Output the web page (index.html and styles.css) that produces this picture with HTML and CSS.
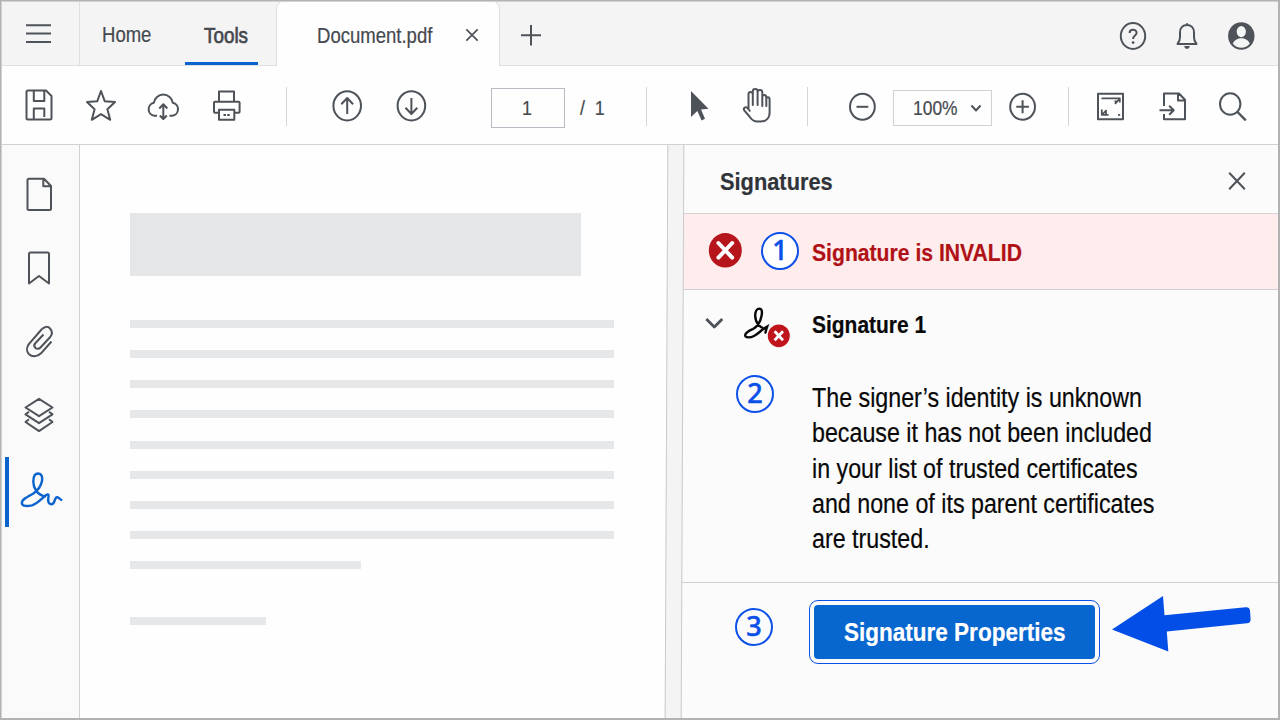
FILE: index.html
```html
<!DOCTYPE html>
<html lang="en">
<head>
    <meta charset="UTF-8">
    <meta name="viewport" content="width=device-width, initial-scale=1.0">
    <title>Document.pdf</title>
    <link rel="stylesheet" href="styles.css">
</head>
<body>
    <div class="window">
        <!-- Tabs -->
        <header class="tab-bar">
            <div class="menu">
                <svg class="icon" width="40" height="40" viewBox="0 0 40 40"><path d="M7 11.2H32M7 19.6H32M7 28H32"/></svg>
            </div>
            <div class="tab home"><span class="text">Home</span></div>
            <div class="tab tools"><span class="text">Tools</span></div>
            <div class="tab file">
                <span class="text">Document.pdf</span>
                <svg class="icon thin" width="16" height="16" viewBox="0 0 16 16"><path d="M2.3 2.3L13.7 13.7M13.7 2.3L2.3 13.7"/></svg>
            </div>
            <div class="new-tab">
                <svg class="icon" width="24" height="24" viewBox="0 0 24 24"><path d="M12 1V21.5M2 11.3H22"/></svg>
            </div>
            <div class="account">
                <svg class="icon" width="32" height="32" viewBox="0 0 32 32"><ellipse cx="16" cy="16" rx="12.2" ry="12.9"/><path d="M12.6 13C12.6 8.8 19.6 8.8 19.6 12.8C19.6 15.6 16.1 15.6 16.1 19"/><circle class="solid" cx="16.1" cy="22.6" r="1.4"/></svg>
                <svg class="icon" width="32" height="32" viewBox="0 0 32 32"><path d="M6.5 24H25.5C23.8 22 23 20.5 23 17V12.5C23 7.8 20 5 16 5S9 7.8 9 12.5V17C9 20.5 8.2 22 6.5 24ZM16 5V3.2"/><path class="solid" d="M13.2 26H18.8C18.3 29.8 13.7 29.8 13.2 26Z"/></svg>
                <svg width="32" height="32" viewBox="0 0 32 32"><ellipse cx="16.3" cy="16" rx="13.2" ry="13.8" fill="#4e5359"/><ellipse cx="16.3" cy="11.6" rx="4.6" ry="5.6" fill="#f4f5f5"/><path d="M7.8 23.5C9.5 19.7 13 18.3 16.3 18.3S23.1 19.7 24.8 23.5C20.5 29.3 12.1 29.3 7.8 23.5Z" fill="#f4f5f5"/></svg>
            </div>
        </header>

        <!-- Toolbar -->
        <div class="toolbar">
            <svg class="icon save" width="40" height="40" viewBox="0 0 40 40"><path d="M9 4.5H27L32.5 10V32C32.5 33 32 33.5 31 33.5H9C8 33.5 7.5 33 7.5 32V6C7.5 5 8 4.5 9 4.5Z"/><path d="M14.8 4.5V15H25.3V4.5M14.8 33.5V22.5H25.3V31"/></svg>
            <svg class="icon star" width="40" height="40" viewBox="0 0 40 40"><path d="M20 5L23.8 15.3L34 16L26.4 23.2L29.2 33.8L20 28.2L10.8 33.8L13.6 23.2L6 16L16.2 15.3Z"/></svg>
            <svg class="icon cloud" width="40" height="40" viewBox="0 0 40 40"><path d="M14 29.8H11.5A6.6 6.6 0 0 1 10.8 16.8A9.6 9.6 0 0 1 29.8 16.8A6.6 6.6 0 0 1 29.2 29.8H26.5"/><path d="M20.3 18.5V32.5M16.3 22.5L20.3 18.2L24.3 22.5M16.8 29.5L20.3 33L23.8 29.5"/></svg>
            <svg class="icon print" width="40" height="40" viewBox="0 0 40 40"><path d="M12 15.5V5.5H27V15.5M12 26.8H8C7.3 26.8 7 26.5 7 25.8V16.8C7 16 7.3 15.8 8 15.8H31.5C32.3 15.8 32.6 16 32.6 16.8V25.8C32.6 26.5 32.3 26.8 31.5 26.8H27.5M12 23.8H27.3V33.8H12Z"/><path d="M16.5 29H23" stroke-dasharray="2.5 1.2"/></svg>
            <div class="divider after-file"></div>
            <svg class="icon page-up" width="40" height="40" viewBox="0 0 40 40"><ellipse cx="20.2" cy="19.8" rx="13.8" ry="14.6"/><path d="M20.2 28V12.5M14.3 18.3L20.2 12L26.1 18.3"/></svg>
            <svg class="icon page-down" width="40" height="40" viewBox="0 0 40 40"><ellipse cx="20.4" cy="19.8" rx="13.8" ry="14.6"/><path d="M20.4 12V27.5M14.5 21.7L20.4 28L26.3 21.7"/></svg>
            <div class="page-input"><span class="text">1</span></div>
            <div class="page-count"><span class="text">/ &nbsp;1</span></div>
            <div class="divider after-page"></div>
            <svg class="icon pointer" width="40" height="40" viewBox="0 0 40 40"><path class="solid" d="M12 5L29.5 22.8L22 23.5L26 32.8L22.6 34.5L18.3 25L12 31Z"/></svg>
            <svg class="icon hand" width="40" height="40" viewBox="0 0 40 40"><path d="M11.5 23.5V8.5C11.5 5.3 15.8 5.3 15.8 8.5V19V5.5C15.8 2.2 20.6 2.2 20.6 5.5V19V6.3C20.6 3.1 25.3 3.1 25.3 6.3V20V11C25.3 8.3 29.3 8.3 29.3 11.5V20V13C29.3 10.6 32.6 10.6 32.6 13.5V26.5C32.6 32.5 28.5 35.5 23.5 35.5H20.5C16.5 35.5 14.3 33.5 12.5 30.5L7.2 24.3C6 21.8 8.6 20.3 10.5 22L13.3 25.5"/></svg>
            <div class="divider after-hand"></div>
            <svg class="icon minus" width="40" height="40" viewBox="0 0 40 40"><ellipse cx="20.4" cy="20.8" rx="12.4" ry="13"/><path d="M14.5 20.8H26.3"/></svg>
            <div class="zoom-select">
                <span class="text">100%</span>
                <svg class="icon" width="12" height="10" viewBox="0 0 12 10"><path d="M1.5 2.5L6 7.5L10.5 2.5"/></svg>
            </div>
            <svg class="icon plus" width="40" height="40" viewBox="0 0 40 40"><ellipse cx="20.6" cy="20.8" rx="12.4" ry="13"/><path d="M14.3 20.8H26.9M20.6 14.3V27.3"/></svg>
            <div class="divider after-zoom"></div>
            <svg class="icon fit" width="40" height="40" viewBox="0 0 40 40"><path d="M8 7.8H33V33.3H8Z"/><path d="M11.5 12.3H29.8V16.5M24.5 15.5H27.5M25 18L29 13.5M11.8 23.5V28.8H18.5M12.3 28.5L16.5 24M16 25V28M28 28.8H30.2" stroke-width="1.8"/></svg>
            <svg class="icon export" width="40" height="40" viewBox="0 0 40 40"><path d="M12 20V7.5H27L33 13.8V33.3H12V28M26 7.5V14.5H33M7.5 24.2H21.5M17.2 19.8L21.7 24.2L17.2 28.7"/></svg>
            <svg class="icon search" width="40" height="40" viewBox="0 0 40 40"><ellipse cx="17.2" cy="18" rx="10.2" ry="10.8"/><path d="M24.5 26L32.8 34.3" stroke-width="2.4"/></svg>
        </div>

        <div class="main">
            <!-- Left navigation -->
            <nav class="sidebar">
                <div class="nav-item"><svg class="icon" width="48" height="48" viewBox="0 0 48 48"><path d="M14 8.8H29L36 16V38.5C36 39.5 35.5 40 34.5 40H14C13 40 12.5 39.5 12.5 38.5V10.3C12.5 9.3 13 8.8 14 8.8ZM28.3 8.8V16.3H36"/></svg></div>
                <div class="nav-item"><svg class="icon" width="48" height="48" viewBox="0 0 48 48"><path d="M14 39.5V10C14 9 14.5 8.5 15.5 8.5H32.5C33.5 8.5 34 9 34 10V39.5L24 32Z"/></svg></div>
                <div class="nav-item"><svg class="icon" width="48" height="48" viewBox="0 0 48 48"><path d="M36.5 23.5L26 35.3C22 39.3 16.8 39.1 14 36.3C11 33 11.5 28.5 14.5 25.3L26.5 11.5C29 8.3 33 8.1 35 10.5C37.3 13 37.3 16.5 35 19.3L25.5 29.5C24 31.2 21.5 31.2 20.3 29.8C19 28.5 19 26.5 20.5 25L28.5 16.5"/></svg></div>
                <div class="nav-item"><svg class="icon" width="48" height="48" viewBox="0 0 48 48"><path d="M24 6.8L37.5 15.5L24 24.2L10.5 15.5ZM14 19.8L10.5 22.4L24 31.2L37.5 22.4L34 19.8M14 27.2L10.5 30L24 39.1L37.5 30L34 27.2"/></svg></div>
                <div class="nav-item active"><svg class="icon" width="48" height="48" viewBox="0 0 48 48"><path d="M30 30.5C22 28.5 18.3 22 18.3 15.5C18.3 10 20.3 7.5 23.3 7.5C26.3 7.6 27.8 10.5 27 15C26 20 23 24.5 18 27.8C12 31 6.8 33.5 6.8 36.8C7.2 40.8 12.5 40.3 17 39.3C23 37.5 27.5 31.5 31.5 28.8C33.2 27.8 34 28.5 33.5 30.8C32.8 34 32.8 38.3 36.7 38.3C40.5 38 39 31.5 42 31.2C44.3 31 44.3 33.2 46.3 33.8"/></svg></div>
            </nav>

            <!-- Document preview -->
            <div class="document">
                <div class="block"></div>
                <div class="line"></div>
                <div class="line"></div>
                <div class="line"></div>
                <div class="line"></div>
                <div class="line"></div>
                <div class="line"></div>
                <div class="line"></div>
                <div class="line"></div>
                <div class="line medium"></div>
                <div class="line short"></div>
            </div>

            <div class="gutter"></div>

            <!-- Signatures panel -->
            <aside class="panel">
                <div class="panel-header">
                    <h1><span class="text">Signatures</span></h1>
                    <svg class="icon" width="20" height="20" viewBox="0 0 20 20"><path d="M2.2 1.7L17.8 18.3M17.8 1.7L2.2 18.3"/></svg>
                </div>
                <div class="status">
                    <svg class="error" width="34" height="36" viewBox="0 0 34 36"><ellipse cx="17.3" cy="18.3" rx="16.5" ry="17.2" fill="#b5151b"/><path d="M10.4 11L24.2 25.6M24.2 11L10.4 25.6" stroke="#fff" stroke-width="4" stroke-linecap="round"/></svg>
                    <div class="number">1</div>
                    <div class="status-text"><span class="text">Signature is INVALID</span></div>
                </div>
                <div class="signature">
                    <svg class="icon chevron" width="20" height="14" viewBox="0 0 20 14"><path d="M2.3 2L10.3 10L18.3 2"/></svg>
                    <svg class="signed" width="48" height="46" viewBox="0 0 48 46"><path d="M24 26.5C18 27 13 20 13.2 13C13.5 9 15.3 6.6 17.3 6.6C20 6.7 20.4 9.8 19.5 14C18.5 19.5 16 24 11 27C7 28.8 3.8 30 3.2 33C3 36.3 8.5 35.8 12 34C17 31.5 19.5 27.5 25.2 24.5C24.3 26.8 24 28.5 23.5 30.5" fill="none" stroke="#080808" stroke-width="2.4" stroke-linecap="round"/><ellipse cx="36.8" cy="33.8" rx="11" ry="11.4" fill="#c0141c"/><path d="M32.6 29.3L41 38.3M41 29.3L32.6 38.3" stroke="#fff" stroke-width="2.8"/></svg>
                    <div class="signature-name"><span class="text">Signature 1</span></div>
                </div>
                <div class="details">
                    <div class="number">2</div>
                    <p class="text">The signer’s identity is unknown<br>because it has not been included<br>in your list of trusted certificates<br>and none of its parent certificates<br>are trusted.</p>
                </div>
                <div class="actions">
                    <div class="number">3</div>
                    <button class="properties"><span class="text">Signature Properties</span></button>
                    <svg class="arrow" width="144" height="60" viewBox="0 0 144 60"><path d="M4 34.5L55 1L56.5 20.3L137.5 12.2Q141.5 11.8 142 15.5L142.6 24Q142.8 28 139 28.3L58.8 36.5L60.3 56.5Z" fill="#044ee8"/></svg>
                </div>
            </aside>
        </div>
    </div>
</body>
</html>
```
FILE: styles.css
```css
* {
    box-sizing: border-box;
}
body {
    margin: 0;
    font-family: "Liberation Sans", Arial, sans-serif;
    color: #45494e;
}
.window {
    position: relative;
    width: 1280px;
    height: 720px;
    overflow: hidden;
    display: flex;
    flex-direction: column;
    background-color: #fefefe;
}
/* window frame, drawn over the bars */
.window::after {
    content: "";
    position: absolute;
    inset: 0;
    z-index: 2;
    border: 1px solid #b2b2b2;
    border-width: 1px 2px 2px 1px;
    box-shadow: inset 1px 1px 0 #d2d2d2;
    pointer-events: none;
}
svg {
    display: block;
    flex: none;
}
.icon {
    fill: none;
    stroke: #4e5359;
    stroke-width: 2;
    stroke-linejoin: round;
}
.icon .solid {
    fill: #4e5359;
    stroke: none;
}
.thin {
    stroke-width: 1.7;
}
/* condensed lettering */
.text {
    display: inline-block;
    transform: scaleX(0.87);
    transform-origin: left center;
    white-space: nowrap;
    -webkit-text-stroke: 0.2px currentColor;
}

/* Tabs */
.tab-bar {
    height: 66px;
    flex: none;
    display: flex;
    background-color: #f4f4f5;
    border-bottom: 1px solid #dddfe2;
}
.menu {
    width: 80px;
    padding: 14px 0 0 19px;
    border-right: 1px solid #dddfe2;
}
.tab {
    font-size: 21.3px;
    line-height: 24px;
    padding-top: 23px;
}
.home {
    width: 105px;
    padding-left: 22px;
}
.tools {
    width: 73px;
    padding: 24px 0 0 19px;
    border-bottom: 3px solid #0b63ce;
}
.tools .text {
    transform: scaleX(0.885);
    -webkit-text-stroke-width: 0.7px;
}
.file {
    width: 224px;
    height: 66px;
    margin-left: 18px;
    padding: 23px 0 0 40px;
    display: flex;
    border: 1px solid #dddfe2;
    border-bottom: none;
    border-radius: 9px 9px 0 0;
    background-color: #fefefe;
}
.file .text {
    width: 147px;
}
.file .icon {
    margin-top: 3px;
}
.new-tab {
    padding: 24px 0 0 19px;
}
.account {
    margin-left: auto;
    padding: 20px 23px 0 0;
    display: flex;
    gap: 22px;
}

/* Toolbar */
.toolbar {
    height: 79px;
    flex: none;
    display: flex;
    align-items: center;
    padding: 2px 0 0 19px;
    border-bottom: 1px solid #d0d2d6;
    font-size: 20.5px;
}
.divider {
    width: 1px;
    height: 39px;
    background-color: #d2d4d7;
}
.star, .cloud {
    margin-left: 22px;
}
.print {
    margin-left: 24px;
}
.after-file {
    margin-left: 39px;
}
.page-up {
    margin-left: 40px;
}
.page-down {
    margin-left: 24px;
}
.page-input {
    width: 74px;
    height: 40px;
    margin: 3px 0 0 60px;
    padding-left: 30px;
    line-height: 38px;
    border: 1px solid #b9bbc3;
}
.page-count {
    width: 27px;
    margin: 3px 0 0 15px;
}
.after-page {
    margin-left: 39px;
}
.pointer {
    margin-left: 32px;
}
.hand {
    margin-left: 18px;
}
.after-hand {
    margin-left: 30px;
}
.minus {
    margin-left: 34px;
}
.zoom-select {
    width: 99px;
    height: 36px;
    margin: 3px 0 0 11px;
    padding-left: 19px;
    display: flex;
    align-items: center;
    border: 1px solid #cfd1d6;
}
.zoom-select .text {
    width: 57px;
    transform: scaleX(0.85);
}
.plus {
    margin-left: 10px;
}
.after-zoom {
    margin-left: 26px;
}
.fit {
    margin-left: 21px;
}
.export {
    margin-left: 22px;
}
.search {
    margin-left: 21px;
}

/* Main area */
.main {
    flex: 1;
    display: flex;
}
.sidebar {
    width: 80px;
    padding-top: 12px;
    background-color: #fafafa;
    border-right: 1px solid #cfd0d4;
}
.nav-item {
    height: 74px;
    display: flex;
    align-items: center;
    padding-left: 15px;
}
.active {
    height: 70px;
    margin: 4px 0 0 5px;
    padding-left: 6px;
    border-left: 4px solid #0b63ce;
}
.active .icon {
    stroke: #0b63ce;
    stroke-width: 2.4;
    stroke-linecap: round;
    margin-top: -4px;
}
.document {
    width: 586px;
    padding: 68px 0 0 50px;
}
.block {
    width: 451px;
    height: 63px;
    margin-bottom: 43.8px;
    background-color: #e5e6e8;
}
.line {
    width: 484px;
    height: 8px;
    margin-bottom: 22.2px;
    background-color: #e6e7e9;
}
.medium {
    width: 231px;
}
.short {
    width: 136px;
    margin-top: 47.5px;
}
.gutter {
    width: 17px;
    background-color: #f4f4f4;
    border-left: 1px solid #c9cacd;
    border-right: 1px solid #c9cacd;
    transform: skewX(-0.27deg);
    z-index: 1;
}

/* Signatures panel */
.panel {
    flex: 1;
    margin-left: -3px;
    background-color: #fbfbfb;
}
.panel > div {
    padding-left: 4px;
    display: flex;
}
.panel-header {
    height: 69px;
    justify-content: space-between;
    border-bottom: 1px solid #d5d3d5;
}
h1 {
    margin: 23px 0 0 36px;
    font-size: 24.5px;
    line-height: 28px;
    color: #30343a;
}
h1 .text {
    transform: scaleX(0.89);
}
.panel-header .icon {
    margin: 26px 33px 0 0;
}
.number {
    width: 38px;
    height: 38px;
    flex: none;
    border: 2.5px solid #0b50e8;
    border-radius: 50%;
    background-color: #fff;
    color: #0b50e8;
    font: 500 27px/32px "Noto Sans", sans-serif;
    -webkit-text-stroke: 0.5px #0b50e8;
    text-align: center;
}
.status {
    height: 76px;
    background-color: #ffecec;
    border-bottom: 1px solid #d2cdd0;
}
.error {
    margin: 18px 0 0 24px;
}
.status .number {
    margin: 18px 0 0 19px;
}
.status-text, .signature-name {
    font-size: 24.5px;
    line-height: 28px;
    font-weight: bold;
}
.status-text .text {
    transform: scaleX(0.863);
}
.signature-name .text {
    transform: scaleX(0.855);
}
.status-text {
    margin: 25px 0 0 13px;
    color: #b01116;
}
.signature {
    height: 85px;
    color: #080808;
}
.chevron {
    margin: 27px 0 0 20px;
    stroke-width: 2.8;
}
.signed {
    margin: 12px 0 0 18px;
}
.signature-name {
    margin: 21px 0 0 22px;
}
.details {
    height: 208px;
    color: #080808;
    border-bottom: 1px solid #cfcfd0;
}
.details .number {
    margin: 0 0 0 52px;
}
.details p {
    margin: 6px 0 0 38px;
    font-size: 27px;
    line-height: 35.3px;
    transform: scaleX(0.861);
}
.details .number, .actions .number {
    background-color: transparent;
}
.actions .number {
    margin: 25px 0 0 51px;
}
.properties {
    width: 281px;
    height: 54px;
    margin: 22px 0 0 41px;
    padding: 0 0 1px 30px;
    border: none;
    border-radius: 4px;
    outline: 1.5px solid #0b50e8;
    outline-offset: 4px;
    background-color: #0866cf;
    color: #fff;
    font: bold 25.5px/28px "Liberation Sans", Arial, sans-serif;
    text-align: left;
}
.properties .text {
    transform: scaleX(0.883);
}
.arrow {
    margin: 12px 0 0 13px;
}
```
